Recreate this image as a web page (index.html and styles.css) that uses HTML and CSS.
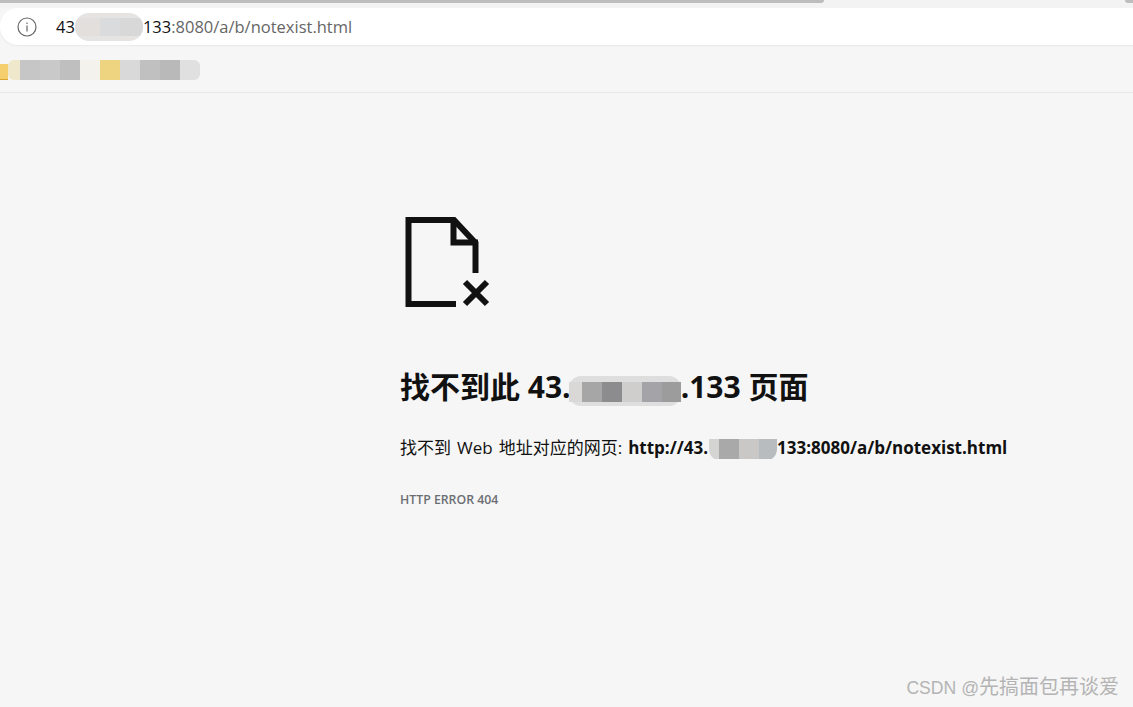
FILE: index.html
```html
<!DOCTYPE html>
<html>
<head>
    <title>找不到此页面</title>
    <link rel="stylesheet" href="styles.css">
</head>
<body>
    <div class="tabstrip">
        <div class="loadbar"></div>
        <div class="loadbar-end"></div>
    </div>
    <div class="addressbar">
        <svg class="info-icon" width="20" height="20" viewBox="0 0 20 20">
            <circle cx="10" cy="10" r="9" fill="none" stroke="#666" stroke-width="1.2"/>
            <rect x="9.4" y="8.5" width="1.2" height="6" fill="#666"/>
            <rect x="9.4" y="5.6" width="1.2" height="1.4" fill="#666"/>
        </svg>
        <span class="url-host">43<span class="smudge">
            <i class="c1"></i><i class="c2"></i><i class="c3"></i>
        </span>133</span><span class="url-rest">:8080/a/b/notexist.html</span>
    </div>
    <div class="bookmarks">
        <span class="folder"></span>
        <span class="mosaic">
            <i class="b0"></i><i class="b1"></i><i class="b2"></i><i class="b3"></i><i class="b4"></i>
            <i class="b5"></i><i class="b6"></i><i class="b7"></i><i class="b8"></i><i class="b9"></i>
        </span>
    </div>

    <div class="content">
        <svg class="file-icon" width="100" height="100" viewBox="0 0 100 100">
            <path d="M56 94H8.500V10H54L75.500 33V63" fill="none" stroke="#111" stroke-width="6"/>
            <path d="M53.500 10V32.500H78" fill="none" stroke="#111" stroke-width="6"/>
            <path d="M65 72L87 94M87 72L65 94" fill="none" stroke="#111" stroke-width="6"/>
        </svg>
        <h1>找不到此 43.<span class="blur-h">
            <i class="h1"></i><i class="h2"></i><i class="h3"></i><i class="h4"></i><i class="h5"></i><i class="h6"></i>
        </span>.133 页面</h1>
        <p class="desc">找不到 Web 地址对应的网页: <b>http://43.<span class="blur-p">
            <i class="p1"></i><i class="p2"></i><i class="p3"></i><i class="p4"></i>
        </span>133:8080/a/b/notexist.html</b></p>
        <p class="code">HTTP ERROR 404</p>
    </div>

    <div class="watermark">CSDN @<span class="watermark-name">先搞面包再谈爱</span></div>
</body>
</html>
```

FILE: styles.css
```css
html, body {
  height: 100%;
}
body {
  margin: 0;
  background-color: #f6f6f6;
  font-family: "Open Sans", "Noto Sans CJK SC", sans-serif;
  color: #111;
  overflow: hidden;
  position: relative;
}
i {
  display: block;
}
.tabstrip {
  height: 8px;
  display: flex;
  justify-content: space-between;
  background-color: #f3f3f3;
}
.loadbar {
  height: 3px;
  width: 824px;
  background-color: #bdbdbd;
  border-bottom-right-radius: 4px;
}
.loadbar-end {
  height: 3px;
  width: 8px;
  background-color: #bdbdbd;
  border-bottom-left-radius: 4px;
}
.addressbar {
  height: 37px;
  margin-right: -20px;
  background-color: #fff;
  border-radius: 18px;
  box-shadow: 0 1px 2px rgba(0, 0, 0, 0.06);
  display: flex;
  align-items: center;
  padding-left: 17px;
  font-size: 16.500px;
}
.info-icon {
  margin-right: 19px;
}
.url-host {
  color: #111;
  display: inline-flex;
  align-items: center;
}
.url-rest {
  color: #666;
}
.smudge {
  display: inline-flex;
  width: 68px;
  height: 28px;
  overflow: hidden;
  border-radius: 14px;
  background-color: #e6e4e2;
  padding: 5px 0;
  box-sizing: border-box;
}
.smudge .c1 { width: 25px; background-color: #e2dfdd; }
.smudge .c2 { width: 20px; background-color: #dadbdc; }
.smudge .c3 { width: 23px; background-color: #d8d8d8; }
.bookmarks {
  height: 48px;
  border-bottom: 1px solid #e8e8e8;
  display: flex;
  align-items: center;
  box-sizing: border-box;
  padding-top: 3px;
}
.folder {
  width: 8px;
  height: 16px;
  margin-top: 4px;
  background-color: #f5cf6e;
  border-bottom: 1px solid #d9a52c;
  box-sizing: border-box;
}
.mosaic {
  display: flex;
  height: 20px;
  border-radius: 0 6px 6px 0;
  overflow: hidden;
}
.mosaic i {
  width: 20px;
}
.mosaic .b0 { width: 12px; background-color: #f0e8cc; border-radius: 6px 0 0 6px; }
.mosaic .b1 { background-color: #c6c6c6; }
.mosaic .b2 { background-color: #c9c9c9; }
.mosaic .b3 { background-color: #bfbfbf; }
.mosaic .b4 { background-color: #f3f2ec; }
.mosaic .b5 { background-color: #eed481; }
.mosaic .b6 { background-color: #d9d9d9; }
.mosaic .b7 { background-color: #c0c0c0; }
.mosaic .b8 { background-color: #b9b9b9; }
.mosaic .b9 { background-color: #e0e0e0; }
.content {
  margin-left: 400px;
  padding-top: 117px;
}
.file-icon {
  display: block;
}
h1 {
  margin: 58px 0 0;
  font-size: 30px;
  line-height: 38px;
  font-weight: 700;
  white-space: nowrap;
}
.blur-h {
  display: inline-flex;
  vertical-align: -4px;
  height: 30px;
  width: 112px;
  margin-left: -2px;
  padding: 6px 0 4px;
  box-sizing: border-box;
  background-color: #dedede;
  border-radius: 12px;
}
.blur-h i { height: 20px; width: 20px; }
.blur-h .h1 { width: 13px; background-color: #d9d8d6; }
.blur-h .h2 { background-color: #a6a6a6; }
.blur-h .h3 { background-color: #8c8c8e; }
.blur-h .h4 { background-color: #cfcecc; }
.blur-h .h5 { background-color: #a4a4a8; }
.blur-h .h6 { width: 19px; background-color: #9c9c9c; }
.desc {
  margin: 29px 0 0;
  font-size: 17px;
  line-height: 26px;
  word-spacing: 1.600px;
  white-space: nowrap;
}
.blur-p {
  display: inline-flex;
  vertical-align: -5px;
  width: 68px;
  height: 22px;
  margin-left: 1px;
  overflow: hidden;
  border-radius: 0 0 12px 12px;
}
.blur-p i { height: 20px; }
.blur-p .p1 { width: 10px; background-color: #d4d4d2; }
.blur-p .p2 { width: 20px; background-color: #a9a9a9; }
.blur-p .p3 { width: 20px; background-color: #c9c8c6; }
.blur-p .p4 { width: 18px; background-color: #b9bcbf; }
.code {
  margin: 31px 0 0;
  font-size: 12.300px;
  line-height: 16px;
  font-weight: 600;
  color: #6b6f73;
}
.watermark {
  position: absolute;
  right: 14px;
  top: 675px;
  font-family: "Liberation Sans", "Noto Sans CJK SC", sans-serif;
  font-size: 17.600px;
  line-height: 24px;
  color: #b4b4b4;
  white-space: nowrap;
}
.watermark-name {
  font-size: 20px;
}
```
